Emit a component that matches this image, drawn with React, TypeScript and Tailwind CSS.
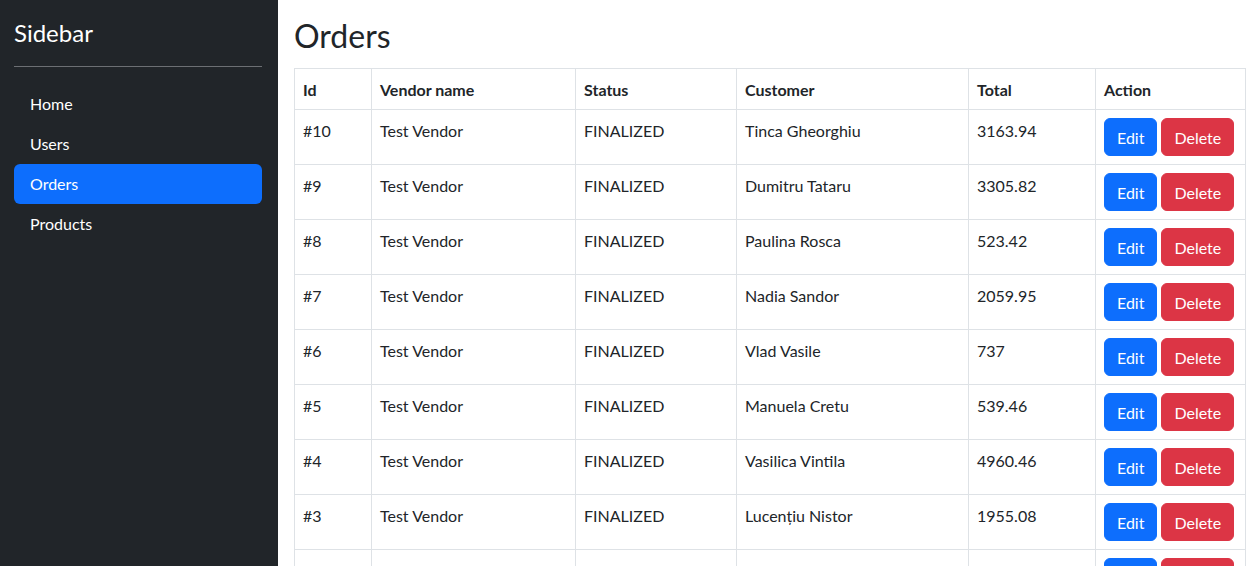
import React from "react";

const orders = [
  { id: 10, vendor: "Test Vendor", status: "FINALIZED", customer: "Tinca Gheorghiu", total: "3163.94" },
  { id: 9, vendor: "Test Vendor", status: "FINALIZED", customer: "Dumitru Tataru", total: "3305.82" },
  { id: 8, vendor: "Test Vendor", status: "FINALIZED", customer: "Paulina Rosca", total: "523.42" },
  { id: 7, vendor: "Test Vendor", status: "FINALIZED", customer: "Nadia Sandor", total: "2059.95" },
  { id: 6, vendor: "Test Vendor", status: "FINALIZED", customer: "Vlad Vasile", total: "737" },
  { id: 5, vendor: "Test Vendor", status: "FINALIZED", customer: "Manuela Cretu", total: "539.46" },
  { id: 4, vendor: "Test Vendor", status: "FINALIZED", customer: "Vasilica Vintila", total: "4960.46" },
  { id: 3, vendor: "Test Vendor", status: "FINALIZED", customer: "Lucențiu Nistor", total: "1955.08" },
  { id: 2, vendor: "Test Vendor", status: "FINALIZED", customer: "Ilie Albu", total: "812.30" },
];

const navItems = ["Home", "Users", "Orders", "Products"];

export default function App() {
  return (
    <div className="flex min-h-screen font-['Lato','Noto_Sans',sans-serif] text-base text-[#212529]">
      {/* ================= SIDEBAR ================= */}
      <aside className="w-[278px] shrink-0 bg-[#212529] py-[14px] pl-[14px] pr-[16px] text-white">
        <div className="pt-[1px] text-2xl leading-[36px]">Sidebar</div>
        <hr className="mb-[13px] mt-[15px] border-t border-[#6c6f73]" />
        <ul className="flex flex-col pt-[4px]">
          {navItems.map((item) => (
            <li key={item}>
              <a
                href="#"
                className={
                  item === "Orders"
                    ? "block rounded-md bg-[#0d6efd] px-4 py-2 leading-6 text-white"
                    : "block rounded-md px-4 py-2 leading-6 text-white"
                }
              >
                {item}
              </a>
            </li>
          ))}
        </ul>
      </aside>

      {/* ================= MAIN ================= */}
      <main className="flex-1 pl-4 pr-[14px] pt-[12px]">
        <h1 className="mb-[9px] text-[32px] font-normal leading-[47px]">Orders</h1>
        <table className="w-full table-fixed border-collapse border border-[#dee2e6]">
          <colgroup>
            <col className="w-[77px]" />
            <col className="w-[204px]" />
            <col className="w-[161px]" />
            <col className="w-[232px]" />
            <col className="w-[127px]" />
            <col />
          </colgroup>
          <thead>
            <tr>
              {["Id", "Vendor name", "Status", "Customer", "Total", "Action"].map((h) => (
                <th
                  key={h}
                  className="border border-[#dee2e6] px-2 pb-[7px] pt-[9px] text-left align-top font-bold leading-6"
                >
                  {h}
                </th>
              ))}
            </tr>
          </thead>
          <tbody>
            {orders.map((o) => (
              <tr key={o.id}>
                <td className="border border-[#dee2e6] px-2 pb-[7px] pt-[9px] align-top leading-6">#{o.id}</td>
                <td className="border border-[#dee2e6] px-2 pb-[7px] pt-[9px] align-top leading-6">{o.vendor}</td>
                <td className="border border-[#dee2e6] px-2 pb-[7px] pt-[9px] align-top leading-6">{o.status}</td>
                <td className="border border-[#dee2e6] px-2 pb-[7px] pt-[9px] align-top leading-6">{o.customer}</td>
                <td className="border border-[#dee2e6] px-2 pb-[7px] pt-[9px] align-top leading-6">{o.total}</td>
                <td className="border border-[#dee2e6] p-2 align-top leading-6">
                  <div className="flex gap-1">
                    <button
                      type="button"
                      className="rounded-md border border-[#0d6efd] bg-[#0d6efd] px-3 pb-[5px] pt-[7px] leading-6 text-white"
                    >
                      Edit
                    </button>
                    <button
                      type="button"
                      className="rounded-md border border-[#dc3545] bg-[#dc3545] px-3 pb-[5px] pt-[7px] leading-6 text-white"
                    >
                      Delete
                    </button>
                  </div>
                </td>
              </tr>
            ))}
          </tbody>
        </table>
      </main>
    </div>
  );
}
